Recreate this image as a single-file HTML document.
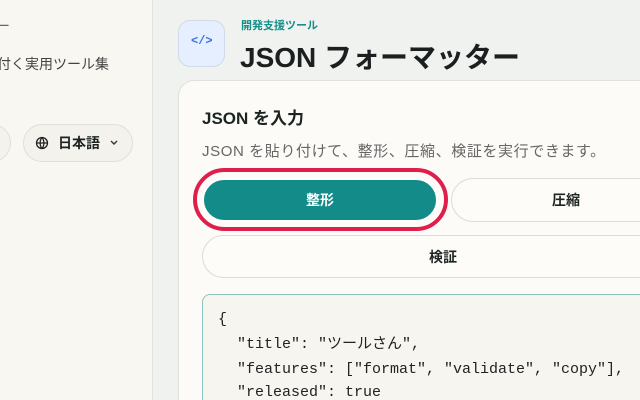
<!DOCTYPE html>
<html><head><meta charset="utf-8"><style>
*{margin:0;padding:0;box-sizing:border-box}
html,body{width:640px;height:400px;overflow:hidden}
body{position:relative;background:#eff2ee;font-family:"Liberation Sans","Noto Sans CJK JP",sans-serif;color:#1c2422}
#wrap{position:absolute;left:0;top:0;width:640px;height:400px;overflow:hidden}
.side{position:absolute;left:0;top:0;width:153px;height:400px;background:#f8f7f2;border-right:1px solid #e2e2dc}
.abs{position:absolute;white-space:nowrap}
.pill{position:absolute;border:1px solid #e0dfd8;border-radius:22px;background:#f3f2ec}
.card{position:absolute;left:178px;top:80px;width:462px;height:320px;background:#fcfbf7;border:1px solid #e0e0da;border-right:none;border-bottom:none;border-radius:16px 0 0 0}
.btn{position:absolute;border:1px solid #dcdcd6;border-radius:22px;background:#fdfcf9;font-weight:bold;font-size:14px;display:flex;align-items:center;justify-content:center}
.btnl{justify-content:flex-start}
.code{font-family:"Liberation Mono","Noto Sans CJK JP",monospace;font-size:15px;color:#222;line-height:14px}
</style></head><body><div id="wrap">
<div class="side">
<div class="abs" style="left:-4px;top:16px;font-size:14px;color:#666">ー</div>
<div class="abs" style="left:-3px;top:54px;font-size:14px;color:#444">付く実用ツール集</div>
<div class="pill" style="left:-30px;top:124px;width:41px;height:38px"></div>
<div class="pill" style="left:23px;top:124px;width:110px;height:38px"></div>
<svg class="abs" style="left:35px;top:136px" width="14" height="14" viewBox="0 0 14 14" fill="none" stroke="#222" stroke-width="1.3"><circle cx="7" cy="7" r="5.5"/><path d="M1.5 7h11M7 1.5c-2.5 3-2.5 8 0 11M7 1.5c2.5 3 2.5 8 0 11"/></svg>
<div class="abs" style="left:58px;top:133px;font-size:14px;font-weight:bold">日本語</div>
<svg class="abs" style="left:109px;top:139px" width="10" height="8" viewBox="0 0 10 8" fill="none" stroke="#333" stroke-width="1.4"><path d="M2 2l3 3 3-3"/></svg>
</div>
<div class="abs" style="left:178px;top:20px;width:47px;height:47px;border-radius:12px;background:#e6efff;border:1px solid #d0dae8"></div>
<div class="abs" style="left:191px;top:34px;font-size:12px;color:#3a6fe0;font-family:'Liberation Mono',monospace;font-weight:bold">&lt;/&gt;</div>
<div class="abs" style="left:241px;top:17px;font-size:11px;font-weight:bold;color:#16908c">開発支援ツール</div>
<div class="abs" style="left:240px;top:36px;font-size:28px;font-weight:bold;color:#1b1f1f">JSON フォーマッター</div>
<div class="card"></div>
<div class="abs" style="left:202px;top:104px;font-size:17px;font-weight:bold">JSON を入力</div>
<div class="abs" style="left:202px;top:140px;font-size:15px;letter-spacing:0.6px;color:#666">JSON を貼り付けて、整形、圧縮、検証を実行できます。</div>
<div class="abs" style="left:193px;top:168px;width:255px;height:63px;border:4px solid #e01e4c;border-radius:32px"></div>
<div class="btn" style="left:202px;top:178px;width:236px;height:44px;background:#128b89;border-color:#fff;border-width:2px;color:#fff">整形</div>
<div class="btn btnl" style="left:451px;top:178px;width:189px;height:44px;border-right:none;border-radius:22px 0 0 22px;padding-left:100px">圧縮</div>
<div class="btn btnl" style="left:202px;top:235px;width:438px;height:43px;border-right:none;border-radius:22px 0 0 22px;padding-left:226px">検証</div>
<div class="abs" style="left:202px;top:294px;width:438px;height:106px;background:#f6f5f0;border:1px solid #8cc3bd;border-right:none;border-bottom:none;border-radius:8px 0 0 0"></div>
<div class="abs code" style="left:218px;top:313px">{</div>
<div class="abs code" style="left:237px;top:338px">"title": "ツールさん",</div>
<div class="abs code" style="left:237px;top:363px">"features": ["format", "validate", "copy"],</div>
<div class="abs code" style="left:237px;top:386px">"released": true</div>
</div></body></html>
